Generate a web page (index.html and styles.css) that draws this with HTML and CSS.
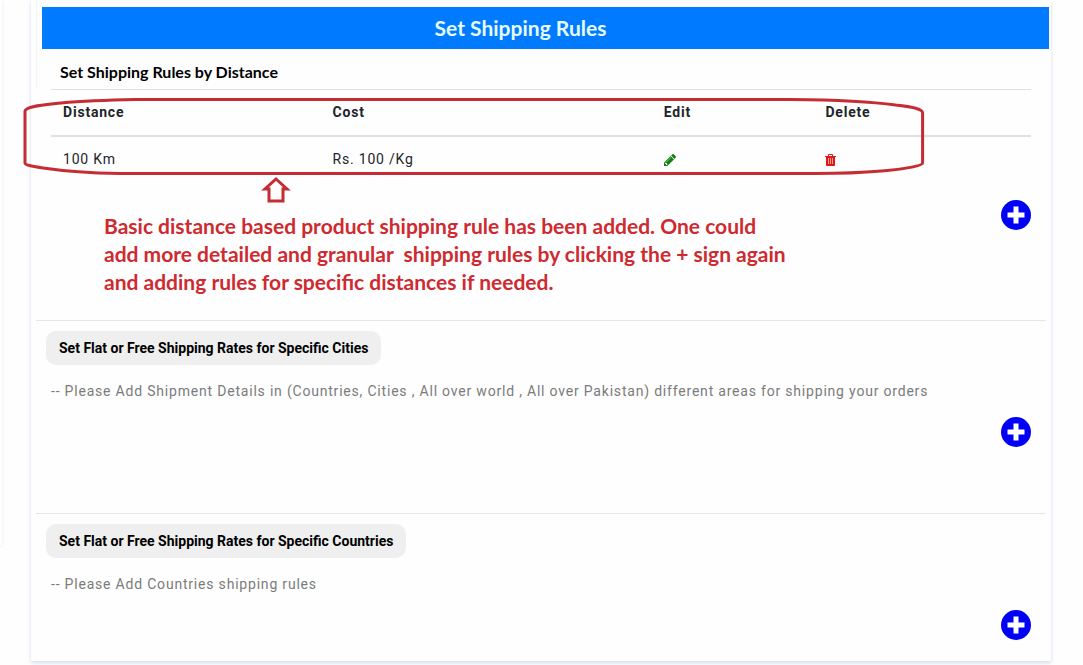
FILE: index.html
```
<!DOCTYPE html>
<html lang="en">
<head>
    <meta charset="UTF-8">
    <meta name="viewport" content="width=device-width, initial-scale=1.0">
    <title>Set Shipping Rules</title>
    <link rel="stylesheet" href="styles.css">
</head>
<body>
    <div class="page">
        <aside class="sidebar"></aside>
        <main class="card">
            <div class="intro">
                <h1 class="title-bar">Set Shipping Rules</h1>
                <h2 class="sub-title">Set Shipping Rules by Distance</h2>
            </div>

            <section class="rules first">
                <div class="table-wrap">
                    <table class="rules-table">
                        <colgroup>
                            <col class="col-distance">
                            <col class="col-cost">
                            <col class="col-edit">
                            <col class="col-delete">
                        </colgroup>
                        <thead>
                            <tr>
                                <th>Distance</th>
                                <th>Cost</th>
                                <th>Edit</th>
                                <th>Delete</th>
                            </tr>
                        </thead>
                        <tbody>
                            <tr>
                                <td>100 Km</td>
                                <td>Rs. 100 /Kg</td>
                                <td>
                                    <button type="button" class="icon-btn edit" aria-label="Edit rule">
                                        <svg width="12" height="12" viewBox="0 149 1515 1515"><path d="M363 1536l91-91-235-235-91 91v107h128v128h107zm523-928q0-22-22-22-10 0-17 7l-542 542q-7 7-7 17 0 22 22 22 10 0 17-7l542-542q7-7 7-17zm-54-192l416 416-832 832h-416v-416zm683 96q0 53-37 90l-166 166-416-416 166-165q36-38 90-38 53 0 91 38l235 234q37 39 37 91z"/></svg>
                                    </button>
                                </td>
                                <td>
                                    <button type="button" class="icon-btn delete" aria-label="Delete rule">
                                        <svg width="11" height="12" viewBox="0 0 11 12"><path class="slats" d="M2 3h7v8H2z"/><path d="M0 2h11v1H0zM3 2V1q0-1 1-1h3q1 0 1 1v1H7V1H4v1zM1 3h9v8q0 1-1 1H2q-1 0-1-1zM3 4v6h1V4zM5 4v6h1V4zM7 4v6h1V4z" fill-rule="evenodd"/></svg>
                                    </button>
                                </td>
                            </tr>
                        </tbody>
                    </table>
                    <!-- hand drawn loop around the new rule -->
                    <svg class="loop" viewBox="0 0 901 78" preserveAspectRatio="none" aria-hidden="true">
                        <path d="M2 13C3 8 20 7 38 5C60 3 85 2 112 1.500H768C815 2 850 4 872 7C890 9 899 11 899 15V65C899 68 880 71 858 73C835 75 815 75.500 792 75.500H97C65 75 40 73 20 70C8 68 2 67 2 65Z"/>
                    </svg>
                    <svg class="arrow" width="30" height="28" viewBox="0 0 30 28" aria-hidden="true">
                        <path d="M15 3L26 13H22V25H8V13H4Z"/>
                    </svg>
                </div>
                <div class="note-row">
                    <p class="note">Basic distance based product shipping rule has been added. One could<br>
                    add more detailed and granular &nbsp;shipping rules by clicking the + sign again<br>
                    and adding rules for specific distances if needed.</p>
                    <button type="button" class="add-btn" aria-label="Add distance rule">
                        <svg width="30" height="30" viewBox="0 0 30 30"><circle cx="15" cy="15" r="15"/><path d="M15 9v12M9 15h12"/></svg>
                    </button>
                </div>
            </section>

            <section class="rules">
                <button type="button" class="pill">Set Flat or Free Shipping Rates for Specific Cities</button>
                <p class="hint">-- Please Add Shipment Details in (Countries, Cities , All over world , All over Pakistan) different areas for shipping your orders</p>
                <button type="button" class="add-btn" aria-label="Add city rate">
                    <svg width="30" height="30" viewBox="0 0 30 30"><circle cx="15" cy="15" r="15"/><path d="M15 9v12M9 15h12"/></svg>
                </button>
            </section>

            <section class="rules last">
                <button type="button" class="pill">Set Flat or Free Shipping Rates for Specific Countries</button>
                <p class="hint">-- Please Add Countries shipping rules</p>
                <button type="button" class="add-btn" aria-label="Add country rate">
                    <svg width="30" height="30" viewBox="0 0 30 30"><circle cx="15" cy="15" r="15"/><path d="M15 9v12M9 15h12"/></svg>
                </button>
            </section>
        </main>
    </div>
</body>
</html>
```

FILE: styles.css
```
* {
    box-sizing: border-box;
}
body {
    margin: 0;
    font-family: Roboto, "Liberation Sans", sans-serif;
    font-size: 14px;
    line-height: 21px;
    letter-spacing: 0.05rem;
    color: #212529;
    background-color: #fefefe;
}
h1, h2, p {
    margin: 0;
}
button {
    border: none;
    padding: 0;
    background: none;
    cursor: pointer;
}
svg {
    display: block;
}
.page {
    display: flex;
    align-items: flex-start;
}
.sidebar {
    width: 2px;
    height: 545px;
    background-color: #fff;
    box-shadow: 0 1px 3px #d9e3f2;
}
.card {
    flex: 1;
    min-width: 0;
    margin: 0 32px 4px 29px;
    padding: 0 5px;
    background-color: #fefefe;
    box-shadow: 0 2px 4px #d3deee;
}

/* Header */
.intro {
    padding: 7px 0 7px 5px;
    margin-right: -3px;
    border-left: 1px solid #f3f5f8;
    font-family: Lato, "Liberation Sans", sans-serif;
    letter-spacing: normal;
}
.title-bar {
    background-color: #007bff;
    color: #e4fbff;
    font-size: 21px;
    font-weight: bold;
    line-height: 42px;
    padding-right: 50px;
    text-align: center;
}
.sub-title {
    color: #000;
    font-size: 16px;
    font-weight: bold;
    line-height: 20px;
    padding: 13px 18px 0;
}

/* Rule sections */
.rules {
    display: flex;
    flex-direction: column;
    align-items: flex-start;
    border-top: 1px solid #e6e6e6;
    padding: 10px 15px 66px 10px;
}
.rules.first {
    align-items: stretch;
    border-top: none;
    padding: 0 15px 24px;
}
.rules.last {
    padding-bottom: 21px;
}
.table-wrap {
    position: relative;
}
.rules-table {
    width: 100%;
    table-layout: fixed;
    border-collapse: separate;
    border-spacing: 0;
    border-top: 1px solid #dee2e6;
}
.rules-table th,
.rules-table td {
    padding: 12px;
    text-align: left;
}
.rules-table th {
    font-weight: bold;
    border-bottom: 2px solid #dee0e2;
}
.col-distance {
    width: 27.5%;
}
.col-cost {
    width: 33.8%;
}
.col-edit {
    width: 16.5%;
}
.icon-btn {
    display: block;
}
.edit {
    fill: #118011;
}
.delete {
    fill: #e01818;
}
.delete .slats {
    fill: #f5a08c;
}
.loop {
    position: absolute;
    top: 9px;
    left: -28px;
    width: 92%;
    height: 78px;
    overflow: visible;
    pointer-events: none;
}
.arrow {
    position: absolute;
    top: 87px;
    left: 210px;
}
.loop path,
.arrow path {
    fill: none;
    stroke: #c42d33;
    stroke-width: 3px;
    vector-effect: non-scaling-stroke;
}
.note-row {
    display: flex;
    align-items: flex-start;
    justify-content: space-between;
    margin-top: 18px;
}
.note {
    padding: 12px 0 0 53px;
    color: #cf2a30;
    font-family: Lato, "Liberation Sans", sans-serif;
    font-size: 21px;
    font-weight: bold;
    letter-spacing: normal;
    line-height: 28px;
}
.pill {
    padding: 0 13px;
    height: 34px;
    border-radius: 10px;
    background-color: #efefef;
    color: #000;
    font-family: inherit;
    font-size: 14px;
    font-weight: bold;
}
.hint {
    margin: 16px 0 15px 5px;
    color: #7b7b7b;
}
.add-btn {
    align-self: flex-end;
    flex-shrink: 0;
}
.note-row .add-btn {
    align-self: flex-start;
}
.add-btn circle {
    fill: #0000f5;
}
.add-btn path {
    stroke: #fff;
    stroke-width: 5px;
    stroke-linecap: square;
}
```
